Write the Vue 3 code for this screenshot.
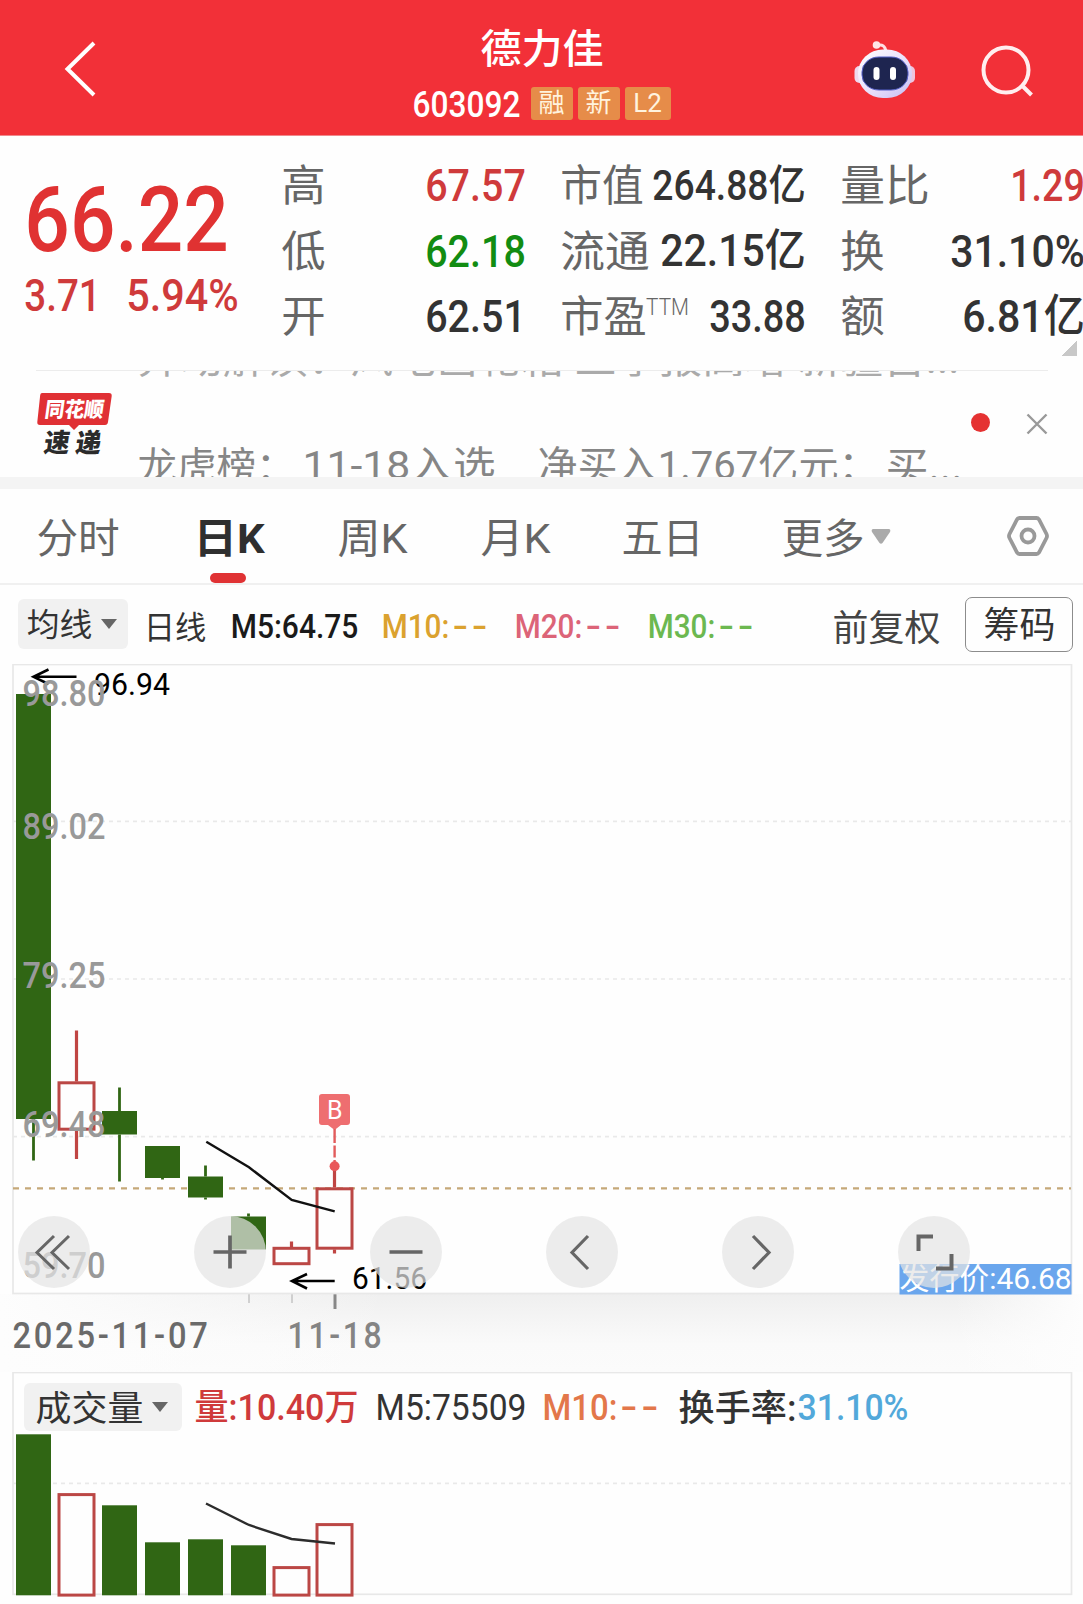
<template>
  <div class="page">
    <!-- 顶部导航 -->
    <header class="nav-bar">
      <svg class="back-icon" width="36" height="60" viewBox="0 0 36 60">
        <path d="M31 4 L4.500 30 L31 56" />
      </svg>
      <div class="nav-title">
        <FitText text="德力佳" :size="40" :width="120" :weight="500" />
        <div class="nav-code">
          <FitText text="603092" :size="37" :width="105" :weight="500" />
          <span class="tags">
            <span class="tag">融</span>
            <span class="tag">新</span>
            <span class="tag tag-wide">L2</span>
          </span>
        </div>
      </div>
      <svg class="robot-icon" width="62" height="58" viewBox="0 0 62 58">
        <defs>
          <linearGradient id="shell" x1="0" y1="0" x2="1" y2="1">
            <stop offset="0" stop-color="#ffffff" />
            <stop offset="0.6" stop-color="#e6dcfa" />
            <stop offset="1" stop-color="#c3bdf3" />
          </linearGradient>
        </defs>
        <path d="M23 4.500 Q31 2 32 11" fill="none" stroke="#ffdfe3" stroke-width="3" />
        <circle cx="22.500" cy="4" r="3.800" fill="#ffe6e8" />
        <rect x="0.500" y="25" width="10" height="17" rx="5" fill="#efd9ee" />
        <rect x="51" y="25" width="10" height="17" rx="5" fill="#efc4dc" />
        <rect x="4" y="8.500" width="54" height="48.500" rx="25" ry="24" fill="url(#shell)" />
        <rect x="8" y="16" width="46" height="33" rx="17" ry="15" fill="#1e2550" stroke="#5560c8" stroke-width="1" />
        <rect x="19.500" y="26" width="6" height="13" rx="3" fill="#fff" />
        <rect x="36" y="26" width="6" height="13" rx="3" fill="#fff" />
      </svg>
      <svg class="search-icon" width="54" height="54" viewBox="0 0 54 54">
        <circle cx="25" cy="25" r="22.500" />
        <path d="M42 41.500 L50.500 50" />
      </svg>
    </header>

    <!-- 行情概览 -->
    <section class="quote">
      <div class="quote-main up">
        <FitText text="66.22" :size="91" :width="197" :weight="500" />
        <div class="quote-change">
          <FitText text="3.71" :size="44" :width="73" :weight="500" />
          <FitText text="5.94%" :size="44" :width="109" :weight="500" />
        </div>
      </div>
      <div v-for="(col, i) in quoteCols" :key="i" class="quote-col">
        <div v-for="row in col" :key="row.label" class="quote-row">
          <span class="quote-label">
            <FitText :text="row.label" :size="43" :width="row.labelWidth" />
            <FitText v-if="row.sup" class="sup" :text="row.sup" :size="23" :width="41" :weight="300" />
          </span>
          <FitText :class="row.tone" :text="row.value" :size="row.size" :width="row.width" :weight="500" />
        </div>
      </div>
      <span class="expand-corner"></span>
    </section>

    <!-- 资讯速递 -->
    <section class="news">
      <svg class="news-logo" width="77" height="64" viewBox="0 0 77 64">
        <path d="M6 1 H73 Q76 1 75.700 4 L72 30 Q71.600 33 69 33 H43 L38 38 L33 33 H4 Q1 33 1.300 30 L4.200 3 Q4.500 1 6 1 Z" fill="#e03034" />
        <g transform="skewX(-8)" text-anchor="middle">
          <text x="41" y="25" font-size="21" textLength="59" lengthAdjust="spacingAndGlyphs" fill="#fff">同花顺</text>
          <text x="44" y="60" font-size="26" textLength="57" lengthAdjust="spacingAndGlyphs" fill="#2b2b2b">速 递</text>
        </g>
      </svg>
      <div class="news-ticker">
        <div class="news-line leaving">
          <FitText text="异动解读：风电齿轮箱 三季报高增 新疆首..." :size="39" :width="819" />
        </div>
        <div class="news-line entering">
          <FitText text="龙虎榜：" :size="39" :width="155" />
          <FitText text="11-18入选" :size="39" :width="190" />
          <FitText class="news-gap" text="净买入1.767亿元：" :size="39" :width="338" />
          <FitText text="买..." :size="39" :width="74" />
        </div>
      </div>
      <span class="news-dot"></span>
      <svg class="close-icon" width="22" height="22" viewBox="0 0 22 22">
        <path d="M1.500 1.500 L20.500 20.500 M20.500 1.500 L1.500 20.500" />
      </svg>
    </section>
    <div class="strip"></div>

    <!-- 周期切换 -->
    <nav class="tabs">
      <span v-for="tab in tabs" :key="tab.name" class="tab" :class="{ active: tab.active }">
        <FitText :text="tab.name" :size="41" :width="tab.width" :weight="tab.active ? 700 : 400" />
        <svg v-if="tab.more" class="tab-arrow" width="20" height="15" viewBox="0 0 20 15">
          <path d="M2 0 H18 Q20 0.500 19 3 L11.500 14 Q10 15.500 8.500 14 L1 3 Q0 0.500 2 0 Z" />
        </svg>
      </span>
      <svg class="setting-icon" width="42" height="40" viewBox="0 0 42 40">
        <path d="M12.500 2 H29.500 Q31 2 32 3.500 L39.500 18 Q40.500 20 39.500 22 L32 36.500 Q31 38 29.500 38 H12.500 Q11 38 10 36.500 L2.500 22 Q1.500 20 2.500 18 L10 3.500 Q11 2 12.500 2 Z" />
        <circle cx="21" cy="20" r="6.500" />
      </svg>
    </nav>

    <!-- 均线指标 -->
    <div class="ma-bar">
      <span class="picker">
        <FitText text="均线" :size="32" :width="63" />
        <i class="caret"></i>
      </span>
      <FitText class="ma-period" text="日线" :size="32" :width="60" />
      <FitText class="ma5" text="M5:64.75" :size="33" :width="125" :weight="500" />
      <span v-for="m in emptyMas" :key="m.name" class="ma-item" :class="m.name">
        <FitText :text="m.label" :size="33" :width="65" :weight="500" />
        <FitText text="--" :size="33" :width="36" :weight="500" :spacing="3" />
      </span>
      <FitText class="adjust" text="前复权" :size="36" :width="105" />
      <span class="chips-btn">
        <FitText text="筹码" :size="36" :width="69" />
      </span>
    </div>

    <!-- K线图 -->
    <section class="k-chart">
      <svg class="chart-svg" width="1083" height="631" viewBox="0 664 1083 631">
        <rect class="frame" x="13" y="664.500" width="1058.500" height="629" />
        <line v-for="y in [821.300, 979, 1136.700]" :key="y" class="grid" x1="13" x2="1071" :y1="y" :y2="y" />
        <line class="price-line" x1="13" x2="1071" y1="1188.300" y2="1188.300" />

        <g v-for="(c, i) in candles" :key="i" :class="c.up ? 'candle-up' : 'candle-down'">
          <line :x1="cx(i)" :x2="cx(i)" :y1="c.high" :y2="c.top" />
          <line :x1="cx(i)" :x2="cx(i)" :y1="c.bottom" :y2="c.low" />
          <rect
            :x="cx(i) - 17.500"
            :y="c.up ? c.top + 1.300 : c.top"
            width="35"
            :height="c.bottom - c.top - (c.up ? 2.600 : 0)"
          />
        </g>
        <polyline class="ma-line" points="206.300,1141.700 249,1167.300 291.700,1200 334.700,1211.300" />

        <!-- 买点标记 -->
        <path d="M322 1094 H347 Q350 1094 350 1097 V1122 Q350 1125 347 1125 H341 L334.600 1130 L328 1125 H322 Q319 1125 319 1122 V1097 Q319 1094 322 1094 Z" fill="#ee6e70" />
        <text class="buy-text" x="334.800" y="1118.500" text-anchor="middle">B</text>
        <path d="M334.600 1129 V1143 M334.600 1145.500 V1157.500 M334.600 1160 V1166" stroke="#e25c5c" stroke-width="2.400" />
        <circle cx="334.600" cy="1166.300" r="5" fill="#e9585a" />

        <!-- 最高最低价 -->
        <path class="arrow" d="M76.500 676.800 H34 M48.500 669.500 L33.500 676.800 L48.500 684" />
        <text class="extreme" x="94" y="694.500" textLength="76" lengthAdjust="spacingAndGlyphs">96.94</text>
        <path class="arrow" d="M334.700 1281 H292.500 M307 1274 L292 1281 L307 1288.500" />
        <text class="extreme" x="352" y="1288.500" textLength="75" lengthAdjust="spacingAndGlyphs">61.56</text>

        <text
          v-for="t in axisLabels"
          :key="t.text"
          class="axis-text"
          x="22.500"
          :y="t.y"
          textLength="83"
          lengthAdjust="spacingAndGlyphs"
        >{{ t.text }}</text>

        <rect x="899.500" y="1264" width="172" height="30.500" fill="#6aa6ed" />
        <text class="issue-text" x="899.500" y="1288.500" textLength="172" lengthAdjust="spacingAndGlyphs">发行价:46.68</text>
      </svg>
      <div class="chart-tools">
        <span v-for="tool in tools" :key="tool.name" class="tool">
          <svg width="72" height="72" viewBox="0 0 72 72">
            <path :d="tool.path" :stroke-width="tool.stroke" />
          </svg>
        </span>
      </div>
    </section>

    <!-- 日期轴 -->
    <div class="date-axis">
      <svg class="ticks" width="1083" height="16" viewBox="0 0 1083 16">
        <path d="M249 0 V9 M292 0 V9" stroke="#c4c4c4" stroke-width="1.500" />
        <path d="M335 0 V15" stroke="#888" stroke-width="3" />
      </svg>
      <div class="dates">
        <FitText text="2025-11-07" :size="36" :width="195" :weight="500" :spacing="3" />
        <FitText class="date-last" text="11-18" :size="36" :width="94" :weight="500" :spacing="3" />
      </div>
    </div>

    <!-- 成交量 -->
    <section class="volume">
      <div class="volume-head">
        <span class="picker volume-picker">
          <FitText text="成交量" :size="35" :width="105" />
          <i class="caret"></i>
        </span>
        <FitText class="vol-value" text="量:10.40万" :size="36" :width="161" :weight="500" />
        <FitText class="vol-ma5" text="M5:75509" :size="36" :width="148" />
        <span class="ma-item vol-ma10">
          <FitText text="M10:" :size="36" :width="72" :weight="500" />
          <FitText text="--" :size="36" :width="39" :weight="500" :spacing="3" />
        </span>
        <FitText class="vol-label" text="换手率:" :size="36" :width="115" :weight="500" />
        <FitText class="vol-rate" text="31.10%" :size="36" :width="108" :weight="500" />
      </div>
      <svg class="chart-svg volume-svg" width="1083" height="232" viewBox="0 1372 1083 232">
        <rect class="frame" x="13" y="1372.500" width="1058.500" height="221.800" />
        <line class="grid" x1="13" x2="1071" y1="1483.300" y2="1483.300" />
        <rect
          v-for="(v, i) in volumes"
          :key="i"
          :class="v.up ? 'bar-up' : 'bar-down'"
          :x="cx(i) - 17.500"
          :y="v.up ? v.top + 1.300 : v.top"
          width="35"
          :height="1595.300 - v.top - (v.up ? 1.500 : 0)"
        />
        <polyline class="ma-line vol-line" points="206,1503.500 249,1525 291.500,1539 335,1543.500" />
      </svg>
    </section>
  </div>
</template>

<script setup>
import { h } from 'vue'

// 等宽适配文本：按给定宽度压缩或拉伸字形
const FitText = (props) => {
  const { text, size, width, weight = 400, spacing = 0 } = props
  // 纯汉字的视觉重心偏高，基线略微下移
  const baseline = /[\d-]/.test(text) ? 0.86 : 0.885
  return h('svg', { width, height: size, style: { overflow: 'visible', display: 'block', flexShrink: 0 } }, [
    h('text', {
      x: -size * 0.04,
      y: size * baseline,
      fill: 'currentColor',
      'font-size': size,
      'font-weight': weight,
      'letter-spacing': spacing,
      textLength: width + size * 0.08,
      lengthAdjust: 'spacingAndGlyphs'
    }, text)
  ])
}
FitText.props = ['text', 'size', 'width', 'weight', 'spacing']

const quoteCols = [
  [
    { label: '高', labelWidth: 41, value: '67.57', width: 97, size: 45, tone: 'up' },
    { label: '低', labelWidth: 41, value: '62.18', width: 97, size: 45, tone: 'down' },
    { label: '开', labelWidth: 41, value: '62.51', width: 97, size: 45, tone: '' }
  ],
  [
    { label: '市值', labelWidth: 80, value: '264.88亿', width: 150, size: 42, tone: '' },
    { label: '流通', labelWidth: 86, value: '22.15亿', width: 142, size: 44, tone: '' },
    { label: '市盈', labelWidth: 83, sup: 'TTM', value: '33.88', width: 93, size: 45, tone: '' }
  ],
  [
    { label: '量比', labelWidth: 86, value: '1.29', width: 71, size: 45, tone: 'up' },
    { label: '换', labelWidth: 41, value: '31.10%', width: 131, size: 45, tone: '' },
    { label: '额', labelWidth: 41, value: '6.81亿', width: 119, size: 45, tone: '' }
  ]
]

const tabs = [
  { name: '分时', width: 80 },
  { name: '日K', width: 68, active: true },
  { name: '周K', width: 67 },
  { name: '月K', width: 67 },
  { name: '五日', width: 79 },
  { name: '更多', width: 80, more: true }
]

const emptyMas = [
  { name: 'ma10', label: 'M10:' },
  { name: 'ma20', label: 'M20:' },
  { name: 'ma30', label: 'M30:' }
]

const cx = (i) => 33.5 + i * 43

const candles = [
  { up: false, high: 694, top: 694, bottom: 1119, low: 1160.5 },
  { up: true, high: 1030.5, top: 1081.5, bottom: 1130.5, low: 1159 },
  { up: false, high: 1087.5, top: 1111, bottom: 1134.5, low: 1181.5 },
  { up: false, high: 1146, top: 1146, bottom: 1178, low: 1179.5 },
  { up: false, high: 1165.5, top: 1176.5, bottom: 1197.5, low: 1199.5 },
  { up: false, high: 1213.5, top: 1216.5, bottom: 1249.5, low: 1249.5 },
  { up: true, high: 1241.5, top: 1247, bottom: 1265, low: 1265 },
  { up: true, high: 1167, top: 1187.5, bottom: 1249.5, low: 1253.5 }
]

const axisLabels = [
  { text: '98.80', y: 705.5 },
  { text: '89.02', y: 838.5 },
  { text: '79.25', y: 988 },
  { text: '69.48', y: 1137 },
  { text: '59.70', y: 1277.5 }
]

const tools = [
  { name: 'first', path: 'M36 20 L19 36.500 L36 53 M51 20 L34 36.500 L51 53', stroke: 3 },
  { name: 'zoom-in', path: 'M19.500 36 H52.500 M36 19.500 V52.500', stroke: 3.7 },
  { name: 'zoom-out', path: 'M19.500 36 H52.500', stroke: 3.7 },
  { name: 'prev', path: 'M42 20 L26 36.500 L42 53', stroke: 3.2 },
  { name: 'next', path: 'M31 20 L47 36.500 L31 53', stroke: 3.2 },
  { name: 'full', path: 'M35 20.500 H20.500 V35 M38 52.500 H53.500 V38', stroke: 4 }
]

const volumes = [
  { up: false, top: 1434.3 },
  { up: true, top: 1493.3 },
  { up: false, top: 1505.3 },
  { up: false, top: 1542.3 },
  { up: false, top: 1539.3 },
  { up: false, top: 1545.3 },
  { up: true, top: 1566.3 },
  { up: true, top: 1523.3 }
]
</script>

<style>
body {
  background: #fff;
}
</style>

<style scoped>
.page {
  width: 1083px;
  height: 1604px;
  overflow: hidden;
  background: #fefefe;
  color: #333;
  font-family: Roboto, "Noto Sans CJK SC", sans-serif;
}

/* 顶部导航 */
.nav-bar {
  display: flex;
  align-items: flex-start;
  box-sizing: border-box;
  height: 136px;
  background: #f23038;
  border-bottom: 1px solid #f0888c;
  color: #fff;
}

.back-icon {
  margin: 39px 0 0 63px;
}

.back-icon path,
.search-icon path,
.search-icon circle {
  fill: none;
  stroke: #fff;
  stroke-width: 4;
}

.search-icon path,
.search-icon circle {
  stroke: #ffeeef;
}

.nav-title {
  display: flex;
  flex-direction: column;
  align-items: center;
  width: 258px;
  margin: 28px 0 0 314px;
}

.nav-code {
  display: flex;
  align-items: center;
  gap: 12px;
  margin-top: 17px;
}

.tags {
  display: flex;
  gap: 5px;
}

.tag {
  width: 42px;
  height: 33px;
  border-radius: 3px;
  background: #e68c49;
  color: #fff3de;
  font-size: 26px;
  line-height: 33px;
  text-align: center;
}

.tag-wide {
  width: 46px;
}

.robot-icon {
  margin: 41px 0 0 183px;
}

.search-icon {
  margin: 45px 0 0 65px;
}

/* 行情概览 */
.quote {
  display: grid;
  grid-template-columns: 256px 241px 242px 241px;
  column-gap: 0;
  position: relative;
  box-sizing: border-box;
  height: 234px;
  padding-left: 27px;
}

.quote-col {
  display: flex;
  flex-direction: column;
  padding-top: 16px;
}

.quote-col:nth-child(3) {
  margin-left: 38px;
  margin-right: -38px;
}

.quote-col:nth-child(4) {
  margin-left: 76px;
  margin-right: -76px;
}

.quote-row {
  display: flex;
  align-items: center;
  justify-content: space-between;
  height: 65.5px;
}

.quote-label {
  display: flex;
  color: #666;
}

.sup {
  margin-top: 1px;
  margin-left: 2px;
}

.up {
  color: #cf3a3b;
}

.down {
  color: #128c12;
}

.quote-main {
  padding-top: 37px;
  padding-left: 1px;
  color: #e03232;
}

.quote-change {
  display: flex;
  gap: 29px;
  margin-top: 9px;
  margin-left: -2px;
  color: #cf3a3b;
}

.expand-corner {
  position: absolute;
  right: 6px;
  bottom: 14px;
  width: 15px;
  height: 15px;
  background: linear-gradient(135deg, transparent 50%, #c8c8c8 50%);
}

/* 资讯速递 */
.news {
  display: flex;
  height: 107px;
  margin-left: 36px;
  width: 1012px;
  box-sizing: border-box;
  border-top: 1px solid #ececec;
}

.news-logo {
  margin-top: 21px;
  font-family: "Noto Sans CJK SC", sans-serif;
  font-weight: 900;
}

.news-ticker {
  width: 830px;
  height: 106px;
  margin-left: 26px;
  overflow: hidden;
}

.news-line {
  display: flex;
  height: 39px;
}

.leaving {
  margin-top: -33px;
  color: #aaa;
}

.entering {
  margin-top: 68px;
  gap: 10px;
  color: #868686;
}

.news-gap {
  margin-left: 35px;
}

.news-dot {
  width: 19px;
  height: 19px;
  margin: 42px 0 0 2px;
  border-radius: 50%;
  background: #e53232;
}

.close-icon {
  margin: 42px 0 0 36px;
}

.close-icon path {
  stroke: #999;
  stroke-width: 2.4;
}

.strip {
  height: 12px;
  background: #f4f4f4;
}

/* 周期切换 */
.tabs {
  display: grid;
  grid-template-columns: 157px 144px 143px 141px 160px 224px auto;
  box-sizing: border-box;
  height: 96px;
  padding-left: 38px;
  border-bottom: 2px solid #f0f0f0;
  color: #666;
}

.tab {
  display: flex;
  align-items: flex-start;
  position: relative;
  padding-top: 28px;
}

.tab.active {
  color: #2f2f2f;
}

.tab.active::after {
  content: '';
  position: absolute;
  left: 15px;
  bottom: 0;
  width: 36px;
  height: 10px;
  border-radius: 5px;
  background: #e03234;
}

.tab-arrow {
  margin: 12px 0 0 8px;
  fill: #aaa;
}

.setting-icon {
  margin-top: 27px;
}

.setting-icon path,
.setting-icon circle {
  fill: none;
  stroke: #999;
  stroke-width: 3.8;
}

/* 均线指标 */
.ma-bar {
  display: flex;
  align-items: center;
  box-sizing: border-box;
  height: 79px;
  padding: 4px 0 0 18px;
}

.picker {
  display: flex;
  align-items: center;
  box-sizing: border-box;
  width: 110px;
  height: 50px;
  margin-top: -5px;
  padding-left: 10px;
  border-radius: 6px;
  background: #f1f1f1;
  color: #333;
}

.caret {
  margin-left: 10px;
  border: 8px solid transparent;
  border-top: 10px solid #666;
  border-bottom: 0;
}

.ma-period {
  margin-left: 17px;
}

.ma5 {
  margin-left: 27px;
  color: #1a1a1a;
}

.ma-item {
  display: flex;
  gap: 6px;
  width: 106px;
  margin-left: 27px;
}

.ma10 {
  margin-left: 26px;
  color: #dba22f;
}

.ma20 {
  color: #dc6478;
}

.ma30 {
  color: #6cb850;
}

.adjust {
  margin-left: 79px;
  color: #444;
}

.chips-btn {
  display: flex;
  align-items: center;
  justify-content: center;
  box-sizing: border-box;
  width: 108px;
  height: 55px;
  margin: -5px 0 0 26px;
  border: 1.5px solid #8c8c8c;
  border-radius: 7px;
}

/* K线图 */
.k-chart {
  position: relative;
  height: 630px;
}

.chart-svg {
  display: block;
}

.frame {
  fill: none;
  stroke: #e8e8e8;
  stroke-width: 1.7;
}

.grid {
  stroke: #e9e9e9;
  stroke-width: 1.7;
  stroke-dasharray: 4 4;
}

.price-line {
  stroke: #c5a878;
  stroke-width: 2.2;
  stroke-dasharray: 6 6;
}

.candle-up line {
  stroke: #c04543;
  stroke-width: 3.2;
}

.candle-up rect,
.bar-up {
  fill: #fefefe;
  stroke: #bb4745;
  stroke-width: 3;
}

.candle-down line {
  stroke: #306614;
  stroke-width: 2.8;
}

.candle-down rect,
.bar-down {
  fill: #306614;
}

.ma-line {
  fill: none;
  stroke: #111;
  stroke-width: 2.4;
}

.vol-line {
  stroke: #2c2c2c;
}

.buy-text {
  fill: #fff;
  font-size: 25px;
}

.arrow {
  fill: none;
  stroke: #000;
  stroke-width: 2.6;
}

.extreme {
  fill: #000;
  font-size: 31px;
}

.axis-text {
  fill: #999;
  font-size: 36px;
  font-weight: 500;
}

.issue-text {
  fill: #fff;
  font-size: 30px;
}

.chart-tools {
  display: flex;
  gap: 104px;
  position: absolute;
  left: 18px;
  top: 552px;
}

.tool {
  width: 72px;
  height: 72px;
  border-radius: 50%;
  background: rgba(228, 228, 228, 0.705);
}

.tool path {
  fill: none;
  stroke: #666;
}

/* 日期轴 */
.date-axis {
  height: 78px;
  background:
    linear-gradient(90deg, #fdfdfd 0, rgba(253, 253, 253, 0) 36%, rgba(253, 253, 253, 0) 88%, #fdfdfd 100%),
    linear-gradient(180deg, #efefef 0, #f5f5f5 35%, #fafafa 65%, #fbfbfb 100%);
}

.ticks {
  display: block;
}

.dates {
  display: flex;
  gap: 80px;
  margin-top: 7px;
  padding-left: 14px;
  color: #6a6a6a;
}

.date-last {
  color: #848484;
}

/* 成交量 */
.volume {
  position: relative;
  height: 232px;
}

.volume-head {
  display: flex;
  align-items: center;
  position: absolute;
  left: 24px;
  top: 11px;
  height: 48px;
}

.volume-svg {
  overflow: hidden;
}

.volume-picker {
  width: 158px;
  height: 48px;
  margin-top: 0;
  padding-left: 13px;
}

.vol-value {
  margin-left: 14px;
  color: #cf3a3b;
}

.vol-ma5 {
  margin-left: 20px;
}

.vol-ma10 {
  width: 117px;
  margin-left: 19px;
  color: #e3774a;
}

.vol-label {
  margin-left: 19px;
}

.vol-rate {
  margin-left: 4px;
  color: #52a8da;
}
</style>
